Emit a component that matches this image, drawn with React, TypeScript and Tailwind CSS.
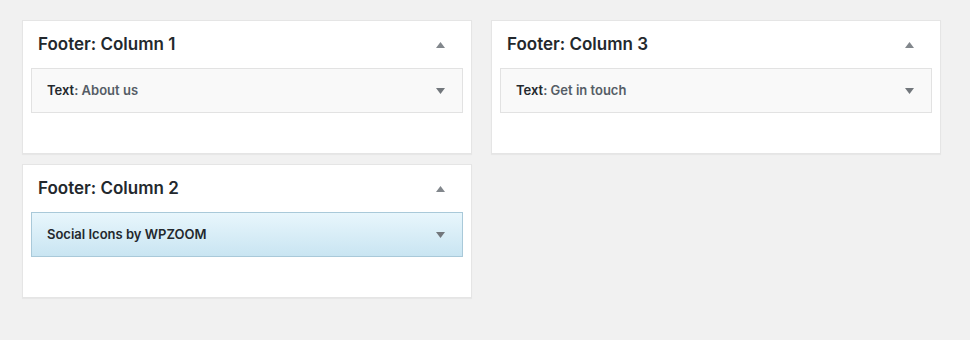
import { FC } from "react";

const Arrow: FC<{ up?: boolean }> = ({ up }) => (
  <svg width="9" height="6" viewBox="0 0 9 6" className="shrink-0">
    {up ? (
      <polygon points="4.5,0 9,6 0,6" fill="#82878c" />
    ) : (
      <polygon points="0,0 9,0 4.5,6" fill="#72777c" />
    )}
  </svg>
);

interface WidgetProps {
  label: string;
  detail?: string;
  active?: boolean;
}

const Widget: FC<WidgetProps> = ({ label, detail, active }) => (
  <div
    className={
      active
        ? "mx-[8px] flex h-[45px] items-center justify-between border border-[#a9c9d9] bg-gradient-to-b from-[#e8f6fc] to-[#c9e5f2] pl-[15px] pr-[17px]"
        : "mx-[8px] flex h-[45px] items-center justify-between border border-[#e2e2e2] bg-[#f9f9f9] pl-[15px] pr-[17px]"
    }
  >
    <h3 className="text-[13px] font-semibold text-[#23282d]">
      {label}
      {detail && <span className="text-[#555d66]">: {detail}</span>}
    </h3>
    <Arrow />
  </div>
);

const Sidebar: FC<WidgetProps & { title: string }> = ({ title, ...widget }) => (
  <div className="h-[134px] border border-[#e5e5e5] bg-white shadow-[0_1px_1px_rgba(0,0,0,0.04)]">
    <div className="flex h-[47px] items-center justify-between pl-[15px] pr-[26px]">
      <h2 className="text-[17px] font-semibold text-[#23282d]">{title}</h2>
      <Arrow up />
    </div>
    <Widget {...widget} />
  </div>
);

export default function App() {
  return (
    <div
      className="min-h-[340px] bg-[#f1f1f1] pl-[22px] pt-[20px]"
      style={{ fontFamily: "Inter, 'Liberation Sans', sans-serif" }}
    >
      <div className="grid grid-cols-[450px_450px] gap-x-[19px] gap-y-[10px]">
        <Sidebar title="Footer: Column 1" label="Text" detail="About us" />
        <Sidebar title="Footer: Column 3" label="Text" detail="Get in touch" />
        <Sidebar title="Footer: Column 2" label="Social Icons by WPZOOM" active />
      </div>
    </div>
  );
}
